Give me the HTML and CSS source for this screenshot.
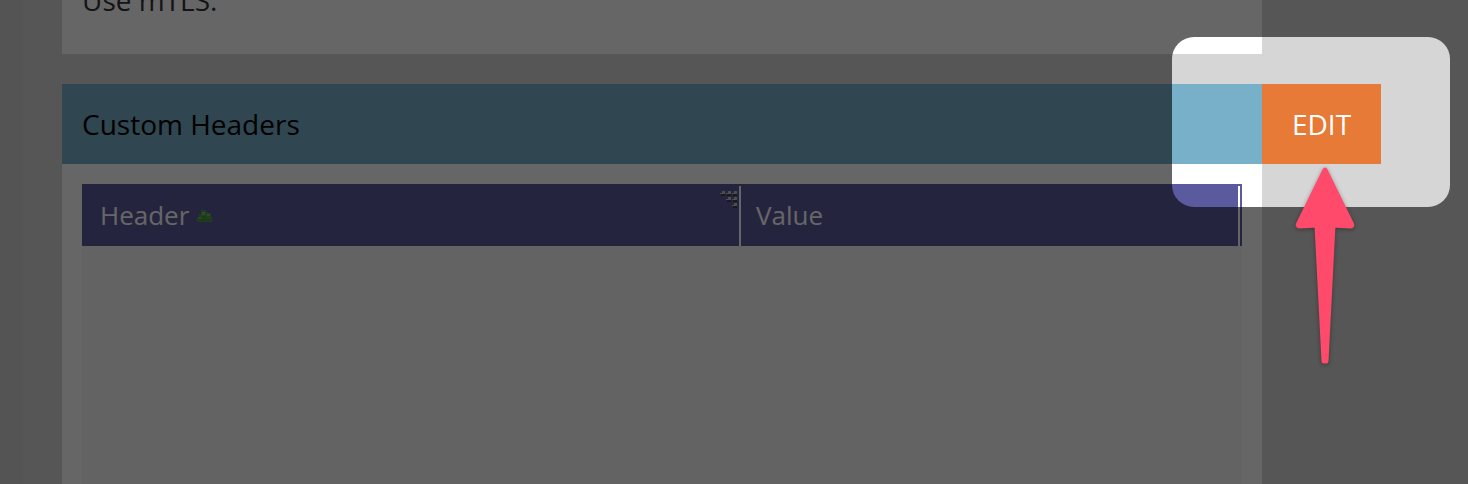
FILE: index.html
```html
<!DOCTYPE html>
<html lang="en">
<head>
<meta charset="utf-8">
<title>Custom Headers</title>
<link rel="stylesheet" href="styles.css">
</head>
<body>
<div class="page">
  <div class="gutter"></div>
  <main class="content">
    <section class="card intro">
      <p class="intro-text">Use mTLS.</p>
    </section>
    <section class="panel">
      <header class="panel-head">
        <h2 class="panel-title">Custom Headers</h2>
        <button class="edit" type="button">EDIT</button>
      </header>
      <div class="card panel-body">
        <div class="grid-area">
          <table class="grid">
            <thead>
              <tr>
                <th class="col-header" scope="col">
                  <span class="label">Header
                    <svg class="sort" viewBox="0 0 16 14" aria-hidden="true"><path fill="#55964f" d="M5 2h5v2h2v1h3v4h1v5H1V9h2V6h2z"/><path fill="#3f9a2e" d="M2 11h13v2H2zM7 8h3v2H7z"/><path fill="#7fb573" d="M6 4h3v3H6zM11 6h3v2h-3zM3 9h2v2H3z"/></svg>
                  </span>
                  <svg class="grip" viewBox="0 0 18 18" aria-hidden="true"><path fill="#3c3c50" d="M1 4h4v2H1zM7 4h4v2H7zM13 4h4v2h-4zM7 10h4v2H7zM13 10h4v2h-4zM13 16h4v2h-4z"/><path fill="#c4c4b8" d="M2 1h3v3H0V3h2zM8 1h3v3H6V3h2zM14 1h3v3h-5V3h2zM8 7h3v3H6V9h2zM14 7h3v3h-5V9h2zM14 13h3v3h-5v-1h2z"/></svg>
                </th>
                <th class="col-value" scope="col">Value</th>
              </tr>
            </thead>
          </table>
        </div>
      </div>
    </section>
  </main>
  <div class="spotlight"></div>
  <svg class="arrow" viewBox="0 0 64 202" aria-hidden="true"><path d="M32 6L58.500 60Q59.500 62 57 62L40 61L33 197H31L24 61L7 62Q4.500 62 5.500 60Z"/></svg>
</div>
</body>
</html>
```
FILE: styles.css
```css
* {
  box-sizing: border-box;
}

body {
  margin: 0;
  background: #d6d6d6;
  font-family: "Open Sans", "Noto Sans", sans-serif;
  font-size: 28px;
  line-height: 40px;
  color: #000;
}

.page {
  position: relative;
  display: flex;
  height: 100vh;
  overflow: hidden;
}

.gutter {
  flex: 0 0 22px;
  background: #d2d2d2;
}

.content {
  flex: 1;
  display: flex;
  flex-direction: column;
  gap: 30px;
  padding: 0 206px 0 40px;
}

.card {
  padding: 20px;
  background: #fff;
}

.intro {
  display: flex;
  align-items: flex-end;
  height: 54px;
  flex: none;
  padding-bottom: 34px;
}

.intro-text {
  margin: 0;
  color: #333;
}

.panel {
  flex: 1;
  display: flex;
  flex-direction: column;
}

.panel-head {
  display: flex;
  height: 80px;
  margin-right: -119px;
}

.panel-title {
  flex: 1;
  margin: 0;
  padding: 20px;
  background: #79b0c9;
  font-size: 28px;
  font-weight: 400;
}

.edit {
  width: 119px;
  border: 0;
  padding: 0;
  background: #e77a36;
  color: #fff;
  font: inherit;
}

.panel-body {
  flex: 1;
  display: flex;
  padding-bottom: 0;
}

.grid-area {
  flex: 1;
  background: #f7f7f7;
}

.grid {
  width: 100%;
  table-layout: fixed;
  border-collapse: separate;
  border-spacing: 0;
  border-top: 2px solid #5b5a9f;
  border-right: 2px solid #5b5a9f;
  background: #5b5a9f;
}

.grid th {
  position: relative;
  height: 60px;
  padding: 0 18px 2px;
  border-right: 2px solid #fff;
  color: #fff;
  font-size: 26px;
  font-weight: 400;
  text-align: left;
}

.grid .col-value {
  width: 499px;
  padding-left: 15px;
}

.label {
  display: flex;
  align-items: center;
  gap: 7px;
}

.sort {
  width: 16px;
  height: 14px;
}

.grip {
  position: absolute;
  top: 4px;
  right: 1px;
  width: 18px;
  height: 18px;
}

.spotlight {
  position: absolute;
  top: 37px;
  right: 18px;
  width: 278px;
  height: 170px;
  border-radius: 22px;
  box-shadow: 0 0 0 9999px rgba(0, 0, 0, 0.6);
  pointer-events: none;
}

.arrow {
  position: absolute;
  top: 164px;
  right: 111px;
  width: 64px;
  height: 202px;
  fill: #ff4a6b;
  stroke: #ff4a6b;
  stroke-width: 5px;
  stroke-linejoin: round;
  filter: drop-shadow(0 1px 2px rgba(0, 0, 0, 0.35));
  pointer-events: none;
}
```
